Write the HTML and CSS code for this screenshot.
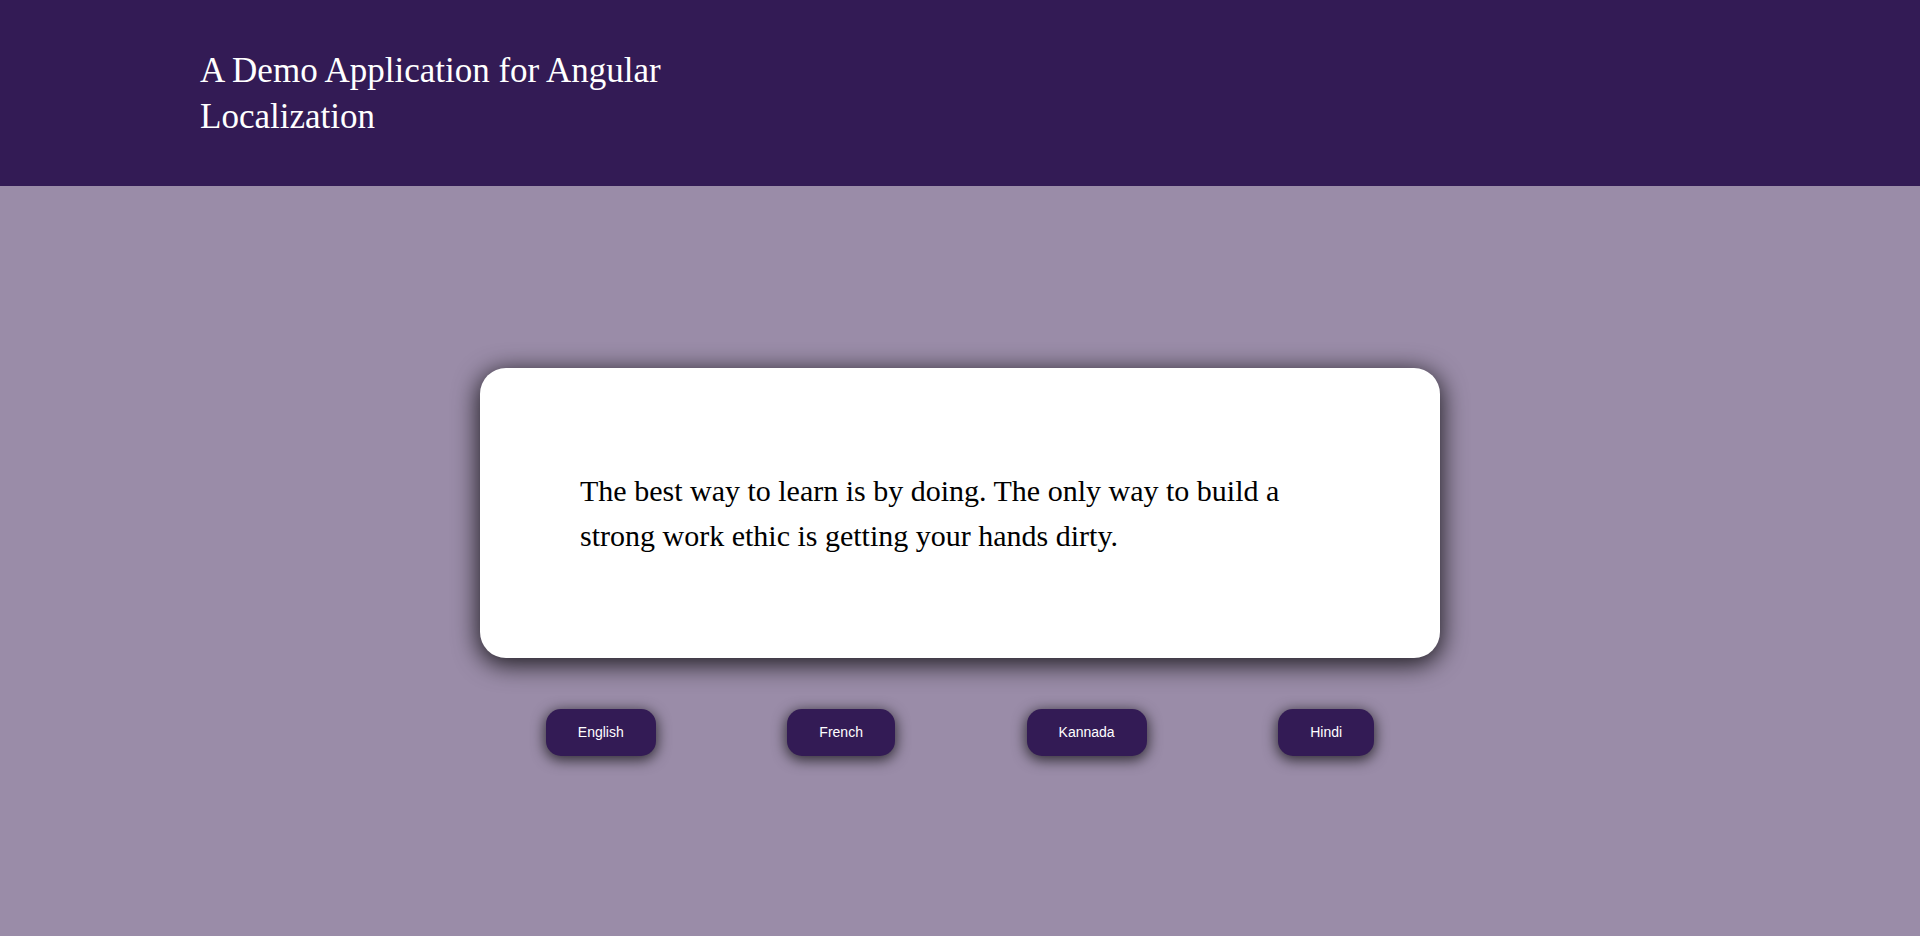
FILE: index.html
```html
<!DOCTYPE html>
<html lang="en">
<head>
<meta charset="utf-8">
<title>Angular Localization Demo</title>
<link rel="stylesheet" href="styles.css">
</head>
<body>
  <header class="top-bar">
    <h1 class="title">A Demo Application for Angular Localization</h1>
  </header>
  <main class="content">
    <section class="quote-card">
      <p class="quote">The best way to learn is by doing. The only way to build a strong work ethic is getting your hands dirty.</p>
    </section>
    <nav class="lang-row">
      <button class="lang-btn">English</button>
      <button class="lang-btn">French</button>
      <button class="lang-btn">Kannada</button>
      <button class="lang-btn">Hindi</button>
    </nav>
  </main>
</body>
</html>
```

FILE: styles.css
```css
html, body {
  margin: 0;
  padding: 0;
}
body {
  background: #9a8ca8;
  font-family: "Liberation Serif", "Times New Roman", serif;
  height: 936px;
  overflow: hidden;
}
.top-bar {
  height: 186px;
  background: #331b55;
  display: flex;
  align-items: center;
  padding-left: 200px;
  padding-top: 2px;
  box-sizing: border-box;
}
.title {
  margin: 0;
  max-width: 490px;
  color: #ffffff;
  font-weight: normal;
  font-size: 35px;
  line-height: 46px;
}
.content {
  height: 750px;
  box-sizing: border-box;
  padding-top: 2px;
  display: flex;
  flex-direction: column;
  align-items: center;
  justify-content: center;
}
.quote-card {
  width: 960px;
  box-sizing: border-box;
  padding: 100px;
  background: #ffffff;
  border-radius: 26px;
  box-shadow: 0 5px 24px 2px rgba(0, 0, 0, 0.8);
}
.quote {
  margin: 0;
  font-size: 30px;
  line-height: 45px;
  color: #000;
}
.lang-row {
  width: 960px;
  margin-top: 51px;
  display: flex;
  justify-content: space-around;
}
.lang-btn {
  background: #331b55;
  color: #ffffff;
  border: none;
  border-radius: 15px;
  padding: 15px 32px;
  font-family: "Liberation Sans", Arial, sans-serif;
  font-size: 14px;
  line-height: 17px;
  box-shadow: 0 3px 14px 1px rgba(0, 0, 0, 0.7);
  cursor: pointer;
}
```
